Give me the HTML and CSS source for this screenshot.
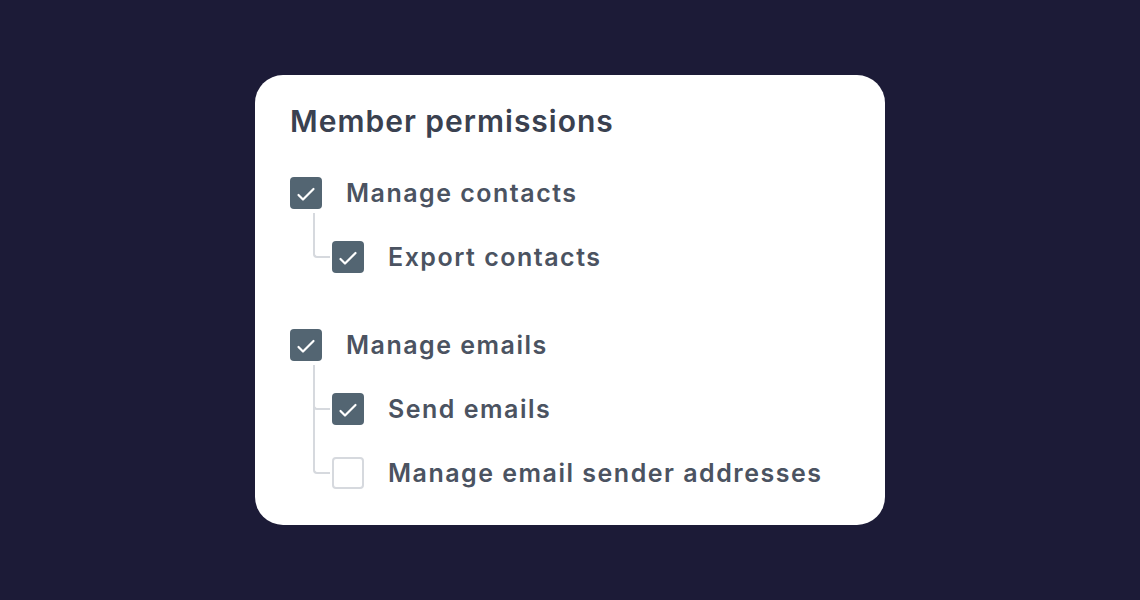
FILE: index.html
```html
<!DOCTYPE html>
<html lang="en">
<head>
  <meta charset="UTF-8">
  <meta name="viewport" content="width=device-width, initial-scale=1.0">
  <title>Member permissions</title>
  <link rel="stylesheet" href="styles.css">
</head>
<body>
  <div class="card">
    <h2 class="card-title">Member permissions</h2>

    <ul class="perm-list">
      <li class="perm-group">
        <label class="perm">
          <span class="box checked"><svg viewBox="0 0 32 32"><path d="M8.5 18l4.5 4.5 10.5-10.5"/></svg></span>
          Manage contacts
        </label>
        <ul class="perm-children">
          <li class="perm-child">
            <label class="perm">
              <span class="box checked"><svg viewBox="0 0 32 32"><path d="M8.5 18l4.5 4.5 10.5-10.5"/></svg></span>
              Export contacts
            </label>
          </li>
        </ul>
      </li>

      <li class="perm-group">
        <label class="perm">
          <span class="box checked"><svg viewBox="0 0 32 32"><path d="M8.5 18l4.5 4.5 10.5-10.5"/></svg></span>
          Manage emails
        </label>
        <ul class="perm-children">
          <li class="perm-child">
            <label class="perm">
              <span class="box checked"><svg viewBox="0 0 32 32"><path d="M8.5 18l4.5 4.5 10.5-10.5"/></svg></span>
              Send emails
            </label>
          </li>
          <li class="perm-child">
            <label class="perm">
              <span class="box"></span>
              Manage email sender addresses
            </label>
          </li>
        </ul>
      </li>
    </ul>
  </div>
</body>
</html>
```

FILE: styles.css
```css
body {
  font-family: Inter, 'Noto Sans', sans-serif;
  background-color: #1c1b37;
  margin: 0;
  height: 100vh;
  display: flex;
  justify-content: center;
  align-items: center;
}
.card {
  background-color: #fff;
  border-radius: 28px;
  width: 630px;
  height: 450px;
  box-sizing: border-box;
  padding: 28px 35px;
}
.card-title {
  margin: 0;
  font-size: 30px;
  line-height: 36px;
  font-weight: 600;
  letter-spacing: 1px;
  color: #3a4150;
}
ul {
  list-style: none;
  margin: 0;
  padding: 0;
}
.perm-list {
  margin-top: 38px;
  display: flex;
  flex-direction: column;
  gap: 56px;
}
.perm-group,
.perm-children {
  display: flex;
  flex-direction: column;
  gap: 32px;
}
.perm-children {
  padding-left: 42px;
}
.perm {
  display: flex;
  align-items: center;
  gap: 24px;
  height: 32px;
  font-size: 25px;
  font-weight: 600;
  letter-spacing: 1.5px;
  color: #4b5361;
}
.box {
  width: 32px;
  height: 32px;
  flex: none;
  box-sizing: border-box;
  border: 2px solid #d6d9de;
  border-radius: 4px;
  background-color: #fff;
}
.box.checked {
  border: none;
  background-color: #536572;
}
.box svg {
  display: block;
  width: 32px;
  height: 32px;
  fill: none;
  stroke: #fff;
  stroke-width: 2.2;
  stroke-linecap: round;
  stroke-linejoin: round;
}
.perm-child {
  position: relative;
}
.perm-child::before {
  content: '';
  position: absolute;
  left: -19px;
  top: -28px;
  width: 17px;
  height: 45px;
  box-sizing: border-box;
  border-left: 2px solid #d6d9de;
  border-bottom: 2px solid #d6d9de;
  border-bottom-left-radius: 4px;
}
.perm-child:not(:last-child)::after {
  content: '';
  position: absolute;
  left: -19px;
  top: 12px;
  width: 2px;
  height: 28px;
  background-color: #d6d9de;
}
```
